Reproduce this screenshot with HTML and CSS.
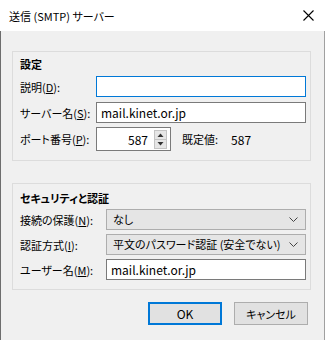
FILE: index.html
```html
<!DOCTYPE html>
<html lang="ja">
<head>
    <meta charset="UTF-8">
    <title>送信 (SMTP) サーバー</title>
    <link rel="stylesheet" href="styles.css">
</head>
<body>
    <div class="window">
        <div class="titlebar">
            <span class="title">送信 (SMTP) サーバー</span>
            <svg class="close" width="11" height="11" viewBox="0 0 11 11">
                <path d="M0.5 0.5 L10.5 10.5 M10.5 0.5 L0.5 10.5" stroke="#000" stroke-width="1.1" fill="none"/>
            </svg>
        </div>
        <div class="content">
            <div class="group settings">
                <div class="group-title">設定</div>
                <div class="row">
                    <span class="label">説明(<u>D</u>):</span>
                    <div class="field focus"></div>
                </div>
                <div class="row">
                    <span class="label">サーバー名(<u>S</u>):</span>
                    <div class="field">mail.kinet.or.jp</div>
                </div>
                <div class="row port-row">
                    <span class="label">ポート番号(<u>P</u>):</span>
                    <div class="port">
                        <span class="port-value">587</span>
                        <svg class="spin" width="13" height="19" viewBox="0 0 13 19">
                            <rect x="0.5" y="0.5" width="12" height="18" fill="#e6e6e6" stroke="#c4c4c4"/>
                            <line x1="1" y1="9.5" x2="12" y2="9.5" stroke="#c4c4c4"/>
                            <path d="M3.5 7 L6.5 3.5 L9.5 7 Z" fill="#333"/>
                            <path d="M3.5 12 L6.5 15.5 L9.5 12 Z" fill="#333"/>
                        </svg>
                    </div>
                    <span class="default-label">既定値:</span>
                    <span class="default-value">587</span>
                </div>
            </div>

            <div class="group security">
                <div class="group-title">セキュリティと認証</div>
                <div class="row">
                    <span class="label">接続の保護(<u>N</u>):</span>
                    <div class="field select">
                        <span>なし</span>
                        <svg class="chevron" width="9" height="5" viewBox="0 0 9 5"><path d="M0.5 0.5 L4.5 4.5 L8.5 0.5" stroke="#444" fill="none"/></svg>
                    </div>
                </div>
                <div class="row">
                    <span class="label">認証方式(<u>I</u>):</span>
                    <div class="field select">
                        <span>平文のパスワード認証 (安全でない)</span>
                        <svg class="chevron" width="9" height="5" viewBox="0 0 9 5"><path d="M0.5 0.5 L4.5 4.5 L8.5 0.5" stroke="#444" fill="none"/></svg>
                    </div>
                </div>
                <div class="row">
                    <span class="label">ユーザー名(<u>M</u>):</span>
                    <div class="field">mail.kinet.or.jp</div>
                </div>
            </div>

            <div class="buttons">
                <button class="btn default">OK</button>
                <button class="btn">キャンセル</button>
            </div>
        </div>
    </div>
</body>
</html>
```

FILE: styles.css
```css
* {
    box-sizing: border-box;
}
body {
    margin: 0;
    font-family: "Noto Sans CJK JP", "Noto Sans", sans-serif;
    font-size: 11px;
    font-feature-settings: "palt";
    color: #000000;
    background-color: #f0f0f0;
}
.window {
    width: 325px;
    height: 340px;
    display: flex;
    flex-direction: column;
}
.titlebar {
    height: 31px;
    background: #ffffff;
    display: flex;
    align-items: center;
    justify-content: space-between;
    padding: 0 11px 0 9px;
}
.title {
    font-size: 11px;
}
.content {
    flex: 1;
    border-left: 1px solid #6d6d6d;
    border-right: 1px solid #a0a0a0;
    padding: 20px 13px 0 11px;
}
.group {
    border: 1px solid #dcdcdc;
    padding: 0 4px 9px 7px;
}
.security {
    margin-top: 22px;
}
.group-title {
    font-weight: bold;
    line-height: 17px;
    padding-top: 4px;
    margin-bottom: 3px;
}
.security .group-title {
    padding-top: 6px;
    margin-bottom: 2px;
}
.row {
    display: flex;
    align-items: center;
    height: 21px;
    margin-top: 5px;
}
.group-title + .row {
    margin-top: 0;
}
.security .row {
    margin-top: 4px;
}
.security .group-title + .row {
    margin-top: 0;
}
.port-row {
    height: 24px;
    margin-top: 4px;
}
.label {
    width: 76px;
    flex-shrink: 0;
    white-space: nowrap;
}
.security .label {
    width: 86px;
}
.field {
    flex: 1;
    height: 21px;
    background: #ffffff;
    border: 1px solid #7a7a7a;
    padding: 0 4px;
    line-height: 19px;
    font-size: 12px;
    white-space: nowrap;
}
.field.focus {
    border-color: #0078d7;
}
.select {
    display: flex;
    align-items: center;
    justify-content: space-between;
    background: #e5e5e5;
    border-color: #adadad;
    font-size: 11px;
    padding: 0 6px 0 6px;
}
.chevron {
    margin-right: 1px;
}
.port {
    width: 75px;
    height: 24px;
    background: #ffffff;
    border: 1px solid #7a7a7a;
    display: flex;
    align-items: center;
    font-size: 12px;
}
.port-value {
    flex: 1;
    text-align: right;
    padding-right: 6px;
}
.spin {
    margin-right: 3px;
}
.default-label {
    margin-left: 11px;
}
.default-value {
    margin-left: 13px;
    font-size: 12px;
}
.buttons {
    display: flex;
    justify-content: flex-end;
    gap: 12px;
    margin-top: 12px;
    padding-right: 3px;
}
.btn {
    width: 74px;
    height: 23px;
    font-family: inherit;
    font-size: 11px;
    font-feature-settings: "palt";
    color: #000000;
    background: #e1e1e1;
    border: 1px solid #adadad;
    padding: 0;
}
.btn.default {
    border: 2px solid #0078d7;
    font-size: 12px;
}
```
